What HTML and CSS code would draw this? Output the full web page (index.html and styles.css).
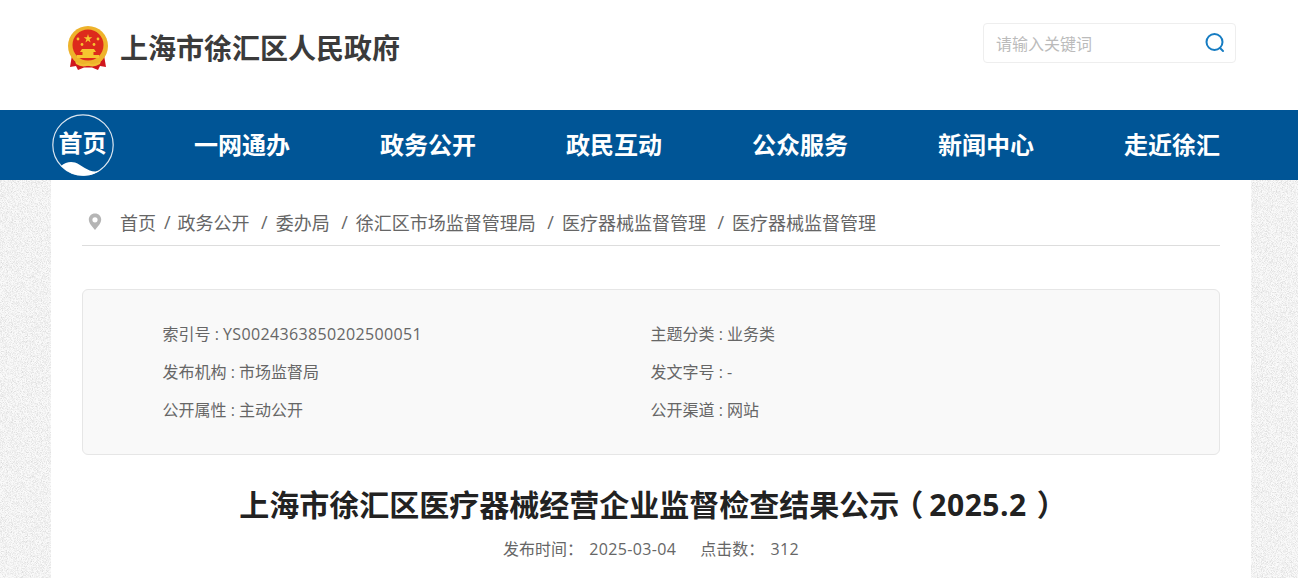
FILE: index.html
```html
<!DOCTYPE html>
<html lang="zh-CN">
<head>
    <meta charset="UTF-8">
    <meta name="viewport" content="width=device-width, initial-scale=1.0">
    <title>上海市徐汇区人民政府</title>
    <link rel="stylesheet" href="styles.css">
</head>
<body>

    <header class="top">
        <div class="logo">
            <svg class="emblem" width="42" height="46" viewBox="0 0 42 46">
                <path d="M5 30 L3 42 L9 41 L11 45 L17 42.5 H25 L31 45 L33 41 L39 42 L37 30 Z" fill="#d0161d"/>
                <circle cx="21" cy="21" r="20" fill="#eeb32b"/>
                <circle cx="21" cy="20" r="15.5" fill="#dd2a1c"/>
                <path d="M21 9 L22 12.2 H25.3 L22.6 14.2 L23.6 17.4 L21 15.4 L18.4 17.4 L19.4 14.2 L16.7 12.2 H20 Z" fill="#f6c62f"/>
                <circle cx="11" cy="14" r="1.4" fill="#f6c62f"/>
                <circle cx="31" cy="14" r="1.4" fill="#f6c62f"/>
                <circle cx="15" cy="19.5" r="1.4" fill="#f6c62f"/>
                <circle cx="27" cy="19.5" r="1.4" fill="#f6c62f"/>
                <path d="M15 24 H27 L29 27 H26.5 V30 H32 V33 H10 V30 H15.5 V27 H13 Z" fill="#f6c62f"/>
                <path d="M8 36 Q15 41 21 38 Q27 41 34 36 L33 39 Q27 43 21 40.5 Q15 43 9 39 Z" fill="#f2bf33"/>
            </svg>
            <h1 class="site-name">上海市徐汇区人民政府</h1>
        </div>
        <form class="search">
            <span class="search-text">请输入关键词</span>
            <svg width="22" height="22" viewBox="0 0 22 22" fill="none" stroke="#167cc2" stroke-width="2">
                <circle cx="10.5" cy="10" r="8"/>
                <path d="M16 16 L19 19" stroke-linecap="round"/>
            </svg>
        </form>
    </header>

    <nav class="nav">
        <div class="nav-inner">
            <a class="home">
                <svg class="home-bg" width="62" height="62" viewBox="0 0 62 62">
                    <circle cx="31" cy="31" r="30.2" fill="none" stroke="#dbe6f0" stroke-width="1.2"/>
                    <path d="M9 52 C13 48.5 18 47 23 48.5 C30 51 36 58 44 57.5 C48 57 52 54 55 50 A30 30 0 0 1 9 52 Z" fill="#fff"/>
                </svg>
                <span class="home-text">首页</span>
            </a>
            <ul class="nav-list">
                <li>一网通办</li>
                <li>政务公开</li>
                <li>政民互动</li>
                <li>公众服务</li>
                <li>新闻中心</li>
                <li>走近徐汇</li>
            </ul>
        </div>
    </nav>

    <main class="main">
        <div class="crumbs">
            <svg class="pin" width="14" height="18" viewBox="0 0 14 18">
                <path fill-rule="evenodd" d="M7 0.5 C3.3 0.5 0.8 3.2 0.8 6.6 C0.8 10.6 5 14.5 7 17 C9 14.5 13.2 10.6 13.2 6.6 C13.2 3.2 10.7 0.5 7 0.5 Z M7 4.2 A2.6 2.6 0 1 1 7 9.4 A2.6 2.6 0 1 1 7 4.2 Z" fill="#b5b5b5"/>
            </svg>
            <a>首页</a><i>/</i><a>政务公开</a><i class="wide">/</i><a>委办局</a><i class="wide">/</i><a>徐汇区市场监督管理局</a><i class="wide">/</i><a>医疗器械监督管理</a><i class="wide">/</i><a>医疗器械监督管理</a>
        </div>

        <div class="info">
            <div>索引号 : <span class="num">YS0024363850202500051</span></div>
            <div>主题分类 : 业务类</div>
            <div>发布机构 : 市场监督局</div>
            <div>发文字号 : -</div>
            <div>公开属性 : 主动公开</div>
            <div>公开渠道 : 网站</div>
        </div>

        <h2 class="title">上海市徐汇区医疗器械经营企业监督检查结果公示<span class="paren-l">（</span><span class="title-num">2025.2</span><span class="paren-r">）</span></h2>
        <p class="meta"><span>发布时间<span class="punct">：</span> <span class="num">2025-03-04</span></span><span>点击数<span class="punct">：</span> <span class="num">312</span></span></p>
    </main>

</body>
</html>
```

FILE: styles.css
```css
html, body {
    margin: 0;
    padding: 0;
}

body {
    font-family: "Open Sans", "Noto Sans CJK SC", sans-serif;
    color: #666;
    background-color: #f0f0f0;
    background-image: url("data:image/svg+xml,%3Csvg xmlns='http://www.w3.org/2000/svg' width='200' height='200'%3E%3Cfilter id='n'%3E%3CfeTurbulence type='fractalNoise' baseFrequency='1.2' numOctaves='1' seed='4'/%3E%3CfeColorMatrix values='0 0 0 0 0.62 0 0 0 0 0.62 0 0 0 0 0.62 1.8 0 0 0 -0.72'/%3E%3C/filter%3E%3Crect width='200' height='200' fill='%23fafafa'/%3E%3Crect width='200' height='200' filter='url(%23n)'/%3E%3C/svg%3E");
    overflow: hidden;
}

.top {
    height: 110px;
    background: #fff;
    display: flex;
    justify-content: space-between;
    align-items: flex-start;
    padding: 0 62px 0 67px;
    box-sizing: border-box;
}

.logo {
    display: flex;
    align-items: center;
    padding-top: 25px;
}

.emblem {
    display: block;
}

.site-name {
    margin: 0 0 0 11px;
    font-size: 28px;
    font-weight: 700;
    color: #3b3b3b;
    line-height: 44px;
}

.search {
    margin-top: 23px;
    width: 253px;
    height: 40px;
    box-sizing: border-box;
    border: 1px solid #eee;
    border-radius: 4px;
    display: flex;
    align-items: center;
    justify-content: space-between;
    padding: 0 9px 0 12px;
}

.search-text {
    font-size: 16px;
    color: #bbb;
}

.nav {
    height: 70px;
    background: #005596;
}

.nav-inner {
    width: 1200px;
    margin-left: 51px;
    display: flex;
    align-items: center;
    height: 70px;
}

.home {
    position: relative;
    width: 62px;
    height: 62px;
    margin: 0 35px 0 1px;
    flex: none;
}

.home-bg {
    position: absolute;
    left: 0;
    top: 0;
}

.home-text {
    position: absolute;
    left: -1px;
    right: 0;
    top: 11px;
    text-align: center;
    font-size: 24px;
    line-height: 36px;
    font-weight: 700;
    color: #fff;
}

.nav-list {
    list-style: none;
    margin: 0;
    padding: 0;
    display: flex;
}

.nav-list li {
    width: 186px;
    text-align: center;
    font-size: 24px;
    font-weight: 700;
    color: #fff;
    line-height: 68px;
}

.main {
    width: 1200px;
    height: 398px;
    margin-left: 51px;
    padding: 0 31px;
    box-sizing: border-box;
    background: #fff;
    overflow: hidden;
}

.crumbs {
    height: 66px;
    box-sizing: border-box;
    border-bottom: 1px solid #ddd;
    display: flex;
    align-items: center;
    font-size: 18px;
    padding: 18px 0 0 6px;
    color: #666;
    white-space: nowrap;
}

.pin {
    margin-right: 18px;
}

.crumbs i {
    font-style: normal;
    margin: 0 7px 0 8px;
}

.crumbs i.wide {
    margin: 0 8px 0 11.5px;
}

.info {
    margin-top: 43px;
    height: 166px;
    box-sizing: border-box;
    border: 1px solid #e6e6e6;
    border-radius: 6px;
    background: #f9f9f9;
    padding: 25px 0 0 79.5px;
    display: grid;
    grid-template-columns: 488px 1fr;
    grid-auto-rows: 38px;
    align-content: start;
    font-size: 16px;
    line-height: 38px;
}

.num {
    letter-spacing: 0.35px;
}

.punct {
    font-family: "Noto Sans CJK TC", sans-serif;
    margin-right: 2px;
}

.title {
    margin: 30px 0 0;
    text-align: center;
    font-size: 30px;
    line-height: 40px;
    font-weight: 700;
    color: #222;
}

.title-num {
    letter-spacing: 0.5px;
}

.paren-l {
    font-feature-settings: "halt";
    margin: 0 6px 0 9px;
}

.paren-r {
    font-feature-settings: "halt";
    margin: 0 11px 0 10px;
}

.meta {
    margin: 11px 0 0;
    text-align: center;
    font-size: 16px;
    line-height: 24px;
}

.meta > span + span {
    margin-left: 24px;
}
```
